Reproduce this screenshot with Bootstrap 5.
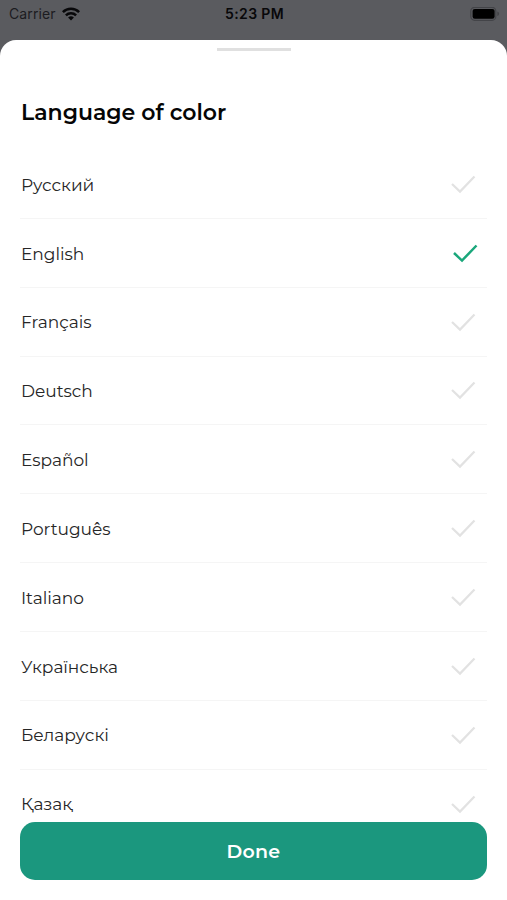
<!DOCTYPE html>
<html lang="en">
<head>
<meta charset="utf-8">
<meta name="viewport" content="width=device-width, initial-scale=1">
<title>Language of color</title>
<link href="https://cdn.jsdelivr.net/npm/bootstrap@5.3.0/dist/css/bootstrap.min.css" rel="stylesheet">
<style>
body { background: #5a5b5f; font-family: Montserrat, Inter, "Open Sans", sans-serif; height: 900px; overflow: hidden; }
.status-bar { height: 40px; padding: 0 7px 12px 9px; font-family: Inter, sans-serif; color: #08080a; font-size: 14px; line-height: 28px; }
.status-bar > div { flex: 1 1 0; }
.carrier { color: #1c1c1f; letter-spacing: .1px; }
.clock { font-weight: 600; font-size: 14px; letter-spacing: .35px; }
.sheet { height: 860px; background: #fff; border-radius: 16px 16px 0 0; padding: 0 20px 20px; }
.grabber { width: 74px; height: 3px; margin-top: 8px; background: #e0e0e0; }
.sheet-title { font-size: 22px; font-weight: 600; line-height: 28px; margin: 48px 0 23px 1px; height: 28px; color: #050505; }
.languages { height: 672px; overflow: hidden; }
.language { height: 68.85px; padding: 0 10px 0 1px; border-bottom: 1px solid #f5f5f5; font-size: 17px; color: #262626; }
.language span { padding-top: 3px; letter-spacing: -.02px; }
.tick { width: 28px; height: 22px; fill: none; stroke: #e2e2e2; stroke-width: 2.2; margin-right: .5px; }
.language.selected .tick { stroke: #1aa77b; stroke-width: 2.5; margin-right: -2px; }
.done { height: 58px; flex: none; background: #1b977e; border-radius: 15px; color: #fff; font-size: 19px; font-weight: 600; letter-spacing: .3px; padding: 8px 0 6px; }
.done:hover { background: #178670; color: #fff; }
</style>
</head>
<body>
<header class="status-bar d-flex align-items-center">
  <div class="carrier d-flex align-items-center">Carrier
    <svg width="18" height="14" viewBox="0 0 18 14" fill="none" stroke="#08080a" stroke-width="2.5" style="margin-left:6px"><path d="M.9 5.200a11.400 11.400 0 0 1 16.200 0M3.900 8.300a7.200 7.200 0 0 1 10.200 0"/><path d="M6.100 10.600a4.100 4.100 0 0 1 5.800 0L9 13.500z" fill="#08080a" stroke="none"/></svg>
  </div>
  <div class="clock text-center">5:23 PM</div>
  <div class="d-flex justify-content-end">
    <svg width="30" height="15" viewBox="0 0 30 15"><rect x=".8" y=".3" width="25" height="13" rx="3.800" fill="none" stroke="#434448" stroke-width="1.200"/><rect x="2.600" y="1.900" width="22" height="9.800" rx="2.200" fill="#000"/><path d="M27.300 4.500q1.800.6 1.800 2.300t-1.800 2.300z" fill="#434448"/></svg>
  </div>
</header>
<main class="sheet d-flex flex-column">
  <div class="grabber mx-auto flex-shrink-0"></div>
  <h1 class="sheet-title flex-shrink-0">Language of color</h1>
  <div class="languages flex-shrink-0">
    <div class="language d-flex align-items-center justify-content-between"><span>Русский</span><svg class="tick" viewBox="0 0 28 22"><path d="M3 11l8 7.600L25.500 3.500"/></svg></div>
    <div class="language selected d-flex align-items-center justify-content-between"><span>English</span><svg class="tick" viewBox="0 0 28 22"><path d="M3 11l8 7.600L25.500 3.500"/></svg></div>
    <div class="language d-flex align-items-center justify-content-between"><span>Français</span><svg class="tick" viewBox="0 0 28 22"><path d="M3 11l8 7.600L25.500 3.500"/></svg></div>
    <div class="language d-flex align-items-center justify-content-between"><span>Deutsch</span><svg class="tick" viewBox="0 0 28 22"><path d="M3 11l8 7.600L25.500 3.500"/></svg></div>
    <div class="language d-flex align-items-center justify-content-between"><span>Español</span><svg class="tick" viewBox="0 0 28 22"><path d="M3 11l8 7.600L25.500 3.500"/></svg></div>
    <div class="language d-flex align-items-center justify-content-between"><span>Português</span><svg class="tick" viewBox="0 0 28 22"><path d="M3 11l8 7.600L25.500 3.500"/></svg></div>
    <div class="language d-flex align-items-center justify-content-between"><span>Italiano</span><svg class="tick" viewBox="0 0 28 22"><path d="M3 11l8 7.600L25.500 3.500"/></svg></div>
    <div class="language d-flex align-items-center justify-content-between"><span>Українська</span><svg class="tick" viewBox="0 0 28 22"><path d="M3 11l8 7.600L25.500 3.500"/></svg></div>
    <div class="language d-flex align-items-center justify-content-between"><span>Беларускі</span><svg class="tick" viewBox="0 0 28 22"><path d="M3 11l8 7.600L25.500 3.500"/></svg></div>
    <div class="language d-flex align-items-center justify-content-between"><span>Қазақ</span><svg class="tick" viewBox="0 0 28 22"><path d="M3 11l8 7.600L25.500 3.500"/></svg></div>
  </div>
  <button type="button" class="done btn w-100 border-0">Done</button>
</main>
<script src="https://cdn.jsdelivr.net/npm/bootstrap@5.3.0/dist/js/bootstrap.bundle.min.js"></script>
</body>
</html>
